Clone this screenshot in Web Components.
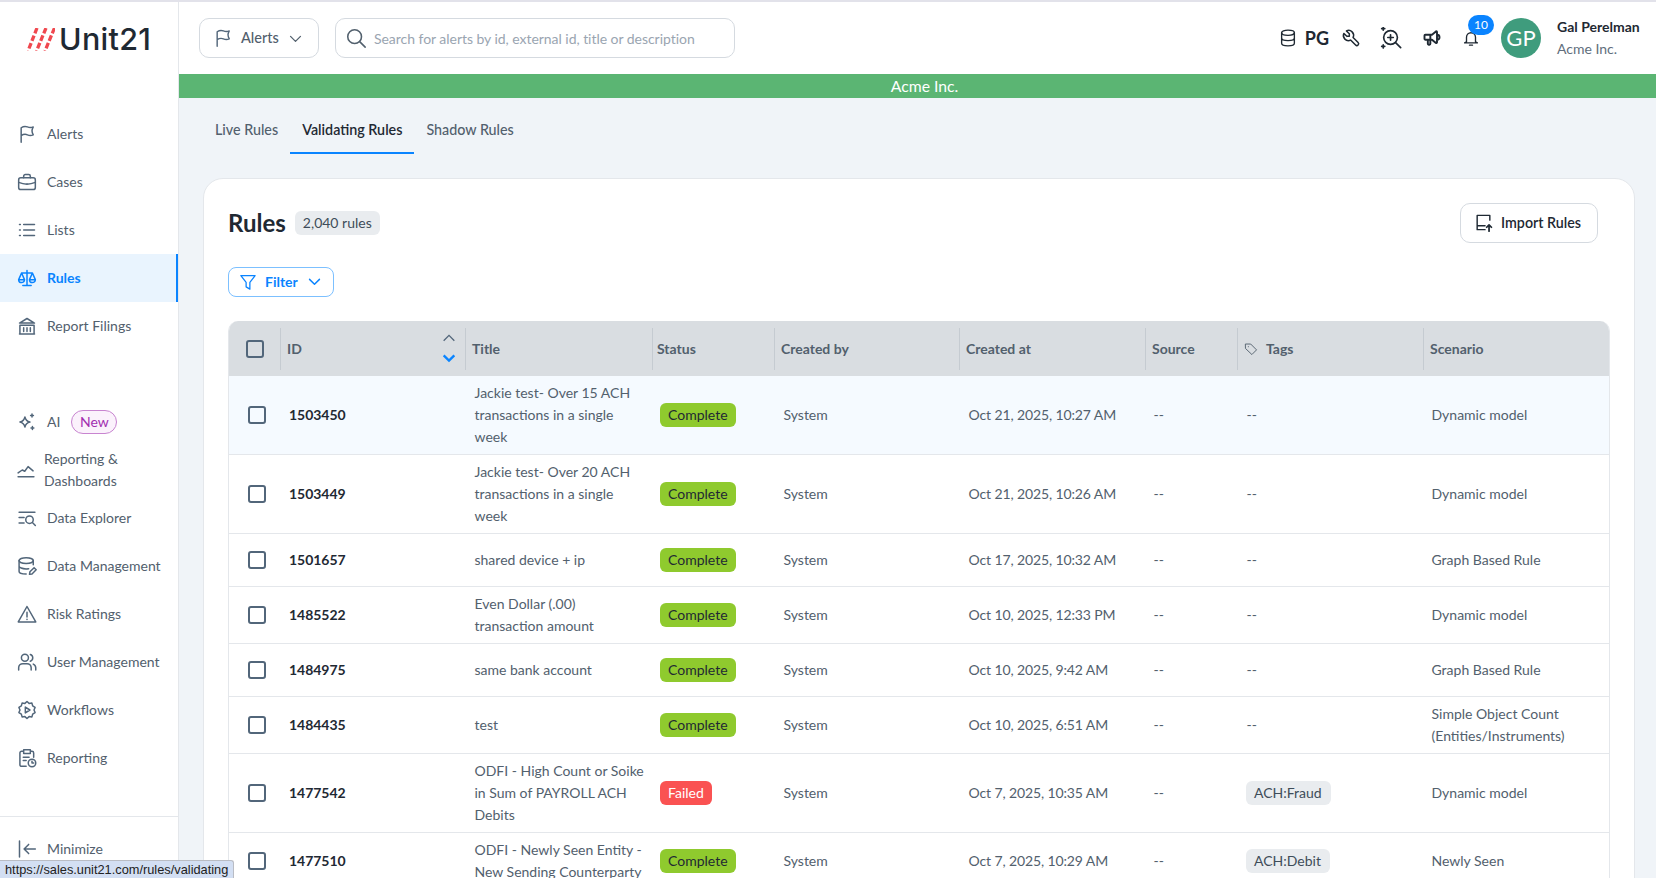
<!DOCTYPE html>
<html lang="en"><head><meta charset="utf-8"><title>Rules</title>
<style>
html,body{margin:0;padding:0;height:878px;overflow:hidden;background:#f0f4f8;font-family:Lato,"Liberation Sans",sans-serif;color:#1f2933}
</style></head><body>
<u21-app>
  <u21-sidebar slot="side">
    <u21-nav icon="flag">Alerts</u21-nav>
    <u21-nav icon="case">Cases</u21-nav>
    <u21-nav icon="list">Lists</u21-nav>
    <u21-nav icon="scale" active>Rules</u21-nav>
    <u21-nav icon="bank">Report Filings</u21-nav>
    <u21-nav icon="spark" class="gap" badge="New">AI</u21-nav>
    <u21-nav icon="chart" tight>Reporting &amp; Dashboards</u21-nav>
    <u21-nav icon="explore">Data Explorer</u21-nav>
    <u21-nav icon="db">Data Management</u21-nav>
    <u21-nav icon="risk">Risk Ratings</u21-nav>
    <u21-nav icon="users">User Management</u21-nav>
    <u21-nav icon="gear">Workflows</u21-nav>
    <u21-nav icon="report">Reporting</u21-nav>
    <u21-nav icon="min" slot="foot">Minimize</u21-nav>
  </u21-sidebar>
  <u21-topbar slot="top"></u21-topbar>
  <u21-banner slot="top">Acme Inc.</u21-banner>
  <u21-tabs slot="main"></u21-tabs>
  <u21-card slot="main">
    <u21-row rid="1503450" status="Complete" by="System" at="Oct 21, 2025, 10:27 AM" scenario="Dynamic model" h="79" hl>Jackie test- Over 15 ACH transactions in a single week</u21-row>
    <u21-row rid="1503449" status="Complete" by="System" at="Oct 21, 2025, 10:26 AM" scenario="Dynamic model" h="79">Jackie test- Over 20 ACH transactions in a single week</u21-row>
    <u21-row rid="1501657" status="Complete" by="System" at="Oct 17, 2025, 10:32 AM" scenario="Graph Based Rule" h="53">shared device + ip</u21-row>
    <u21-row rid="1485522" status="Complete" by="System" at="Oct 10, 2025, 12:33 PM" scenario="Dynamic model" h="57">Even Dollar (.00)<br>transaction amount</u21-row>
    <u21-row rid="1484975" status="Complete" by="System" at="Oct 10, 2025, 9:42 AM" scenario="Graph Based Rule" h="53">same bank account</u21-row>
    <u21-row rid="1484435" status="Complete" by="System" at="Oct 10, 2025, 6:51 AM" scenario="Simple Object Count (Entities/Instruments)" h="57">test</u21-row>
    <u21-row rid="1477542" status="Failed" by="System" at="Oct 7, 2025, 10:35 AM" tags="ACH:Fraud" scenario="Dynamic model" h="79">ODFI - High Count or Soike in Sum of PAYROLL ACH Debits</u21-row>
    <u21-row rid="1477510" status="Complete" by="System" at="Oct 7, 2025, 10:29 AM" tags="ACH:Debit" scenario="Newly Seen" h="57">ODFI - Newly Seen Entity - New Sending Counterparty</u21-row>
  </u21-card>
  <u21-status slot="over">https://sales.unit21.com/rules/validating</u21-status>
</u21-app>
<script>
const I={
flag:'<path d="M5 22V4.500c3-2 5-2 7.500-1s4.500 1 7 0c-1 2-1.500 3-1.500 4.500s.5 3 1.500 5c-2.500 1-4.500 1-7 0s-4.500-1-7.500 1"/>',
case:'<rect x="2" y="7" width="20" height="14" rx="2.500"/><path d="M8 7V5a2 2 0 0 1 2-2h4a2 2 0 0 1 2 2v2M2 12.500c6 2.500 14 2.500 20 0M12 14v.3"/>',
list:'<path d="M8 5.500h13M8 12h13M8 18.500h13M3 5.500h1M3 12h1M3 18.500h1"/>',
scale:'<path d="M12 3v18M7 21h10M5.500 6h13M5.500 6L2 14a3.500 3.500 0 0 0 7 0zM18.500 6L15 14a3.500 3.500 0 0 0 7 0zM2 14h7M15 14h7"/>',
bank:'<path d="M3 8.500L12 3l9 5.500zM3 21.500h18M3.500 21.500V11h17v10.500M8 14v4.500M12 14v4.500M16 14v4.500"/>',
spark:'<path d="M9.500 6c.8 3.500 2.700 5.400 6 6-3.300.8-5.200 2.700-6 6-.8-3.300-2.700-5.200-6-6 3.300-.6 5.200-2.500 6-6zM18 2.500v3.500M16.300 4.200h3.400M18.500 17.500v3.500M16.800 19.200h3.400"/>',
chart:'<path d="M2.500 20h19M2.500 15.500l5-3.500 3 1.500 4-5.500 6 5"/>',
explore:'<path d="M2.500 5h19M2.500 11.500h6M2.500 18h6"/><circle cx="15" cy="14" r="4.500"/><path d="M18.500 17.500l3.500 3.500"/>',
db:'<ellipse cx="11" cy="5.500" rx="8.500" ry="3.500"/><path d="M2.500 5.500v13c0 1.700 3.500 3 8.500 3M19.500 5.500v5M2.500 12c0 1.900 3.800 3.500 8.500 3.500 1 0 2-.1 3-.2M15 22l.5-3 5-5 2.500 2.500-5 5z"/>',
risk:'<path d="M12 3L1.500 21.500h21zM12 10v5.500M12 18.300v.2"/>',
users:'<circle cx="9.500" cy="7" r="4.200"/><path d="M2 21.500V19a5 5 0 0 1 5-5h5a5 5 0 0 1 5 5v2.500M16 3a4.200 4.200 0 0 1 0 8M22.500 21.500V19a5 5 0 0 0-3-4.500"/>',
gear:'<path d="M12 1.800l2.500 2.300 3.400-.4.900 3.300 2.900 1.900-1.300 3.100 1.300 3.100-2.900 1.900-.9 3.300-3.400-.4-2.500 2.300-2.500-2.300-3.400.4-.9-3.300-2.900-1.900 1.300-3.100-1.300-3.100 2.900-1.900.9-3.300 3.400.4z"/><path d="M10 8.500l5.500 3.500-5.500 3.500z"/>',
report:'<path d="M11 22H5.500a2 2 0 0 1-2-2V6a2 2 0 0 1 2-2H8M16 4h2a2 2 0 0 1 2 2v5M8 2h8v4.500H8zM7.500 11h7M7.500 15h3.500"/><circle cx="18" cy="18" r="4.500"/><path d="M18 15.800V18h2"/>',
min:'<path d="M3 2.500v19M22 12H8.500M14 6.500L8.500 12l5.500 5.500"/>',
search:'<circle cx="10.500" cy="10.500" r="7.500"/><path d="M16 16l6 6"/>',
chev:'<path d="M5 9l7 7 7-7"/>',
filter:'<path d="M2.500 3.500h19l-7 9v9l-5-3v-6z"/>',
imp:'<path d="M20 9V3H4v18h10M4 16h10"/><path d="M19 23v-8M16 18l3-3 3 3" stroke-width="2.200"/>',
tag:'<path d="M3 3.500h8.500L21.500 13.500l-8 8L3 11.500zM7.500 8v.2"/>',
wrench:'<path d="M7 10h3V7L6.500 3.500a6 6 0 0 1 8 8l6 6a2 2 0 0 1-3 3l-6-6a6 6 0 0 1-8-8L7 10"/>',
aisearch:'<circle cx="11.500" cy="11.500" r="7.500"/><path d="M17 17l5.500 5.500M11.500 8.500v6M8.500 11.500h6M3.500 0v3.500M1.800 1.800h3.400M3.500 19.500V23M1.800 21.200h3.400"/>',
mega:'<path d="M18 8a3 3 0 0 1 0 6M10 8v11a1 1 0 0 1-1 1H8a1 1 0 0 1-1-1v-5M12 8l4.700-3.900A.9.9 0 0 1 18 4.800v12.400a.9.9 0 0 1-1.300.7L12 14H4a1 1 0 0 1-1-1V9a1 1 0 0 1 1-1h8"/>',
bell:'<path d="M6 17V11a6 6 0 0 1 12 0v6l2.500 1.500h-17zM10 21.500h4"/>',
dbs:'<ellipse cx="12" cy="5" rx="8.500" ry="3.500"/><path d="M3.500 5v14c0 1.900 3.800 3.500 8.500 3.500s8.500-1.600 8.500-3.500V5M3.500 12c0 1.900 3.800 3.500 8.500 3.500s8.500-1.600 8.500-3.500"/>'
};
const svg=(n,s,c='currentColor',w=2)=>`<svg width="${s}" height="${s}" viewBox="0 0 24 24" fill="none" stroke="${c}" stroke-width="${w}" stroke-linecap="round" stroke-linejoin="round" aria-hidden="true">${I[n]}</svg>`;
function el(name,render){customElements.define(name,class extends HTMLElement{constructor(){super();this.attachShadow({mode:'open'})}connectedCallback(){this.shadowRoot.innerHTML=render(this)}})}
const COLS='51px 185px 187px 122px 185px 186px 92px 186px 186px';

el('u21-app',()=>`<style>
:host{display:grid;grid-template-columns:179px 1fr;grid-template-rows:auto 1fr;height:876px;border-top:2px solid #e2e2ea;position:relative;overflow:hidden}
.side{grid-row:1/3}
.main{padding:0 21px 0 24px;min-width:0;overflow:hidden}
</style>
<div class="side"><slot name="side"></slot></div>
<div><slot name="top"></slot></div>
<div class="main"><slot name="main"></slot></div>
<slot name="over"></slot>`);

el('u21-sidebar',()=>`<style>
:host{display:flex;flex-direction:column;height:876px;background:#fff;border-right:1px solid #e4e7eb;box-sizing:border-box;overflow:hidden}
.logo{height:108px;display:flex;align-items:flex-start;gap:4px;padding:22px 0 0 27px;box-sizing:border-box;flex:none}
.logo svg{margin-top:4px;flex:none}
.logo b{font:500 30.500px/1 Inter,Roboto,sans-serif;color:#1f2933;letter-spacing:.3px}
.nav{flex:1;display:flex;flex-direction:column;min-height:0}
.foot{border-top:1px solid #e4e7eb;flex:none;padding-top:8px;height:62px;box-sizing:border-box}
</style>
<div class="logo"><svg width="28" height="23" viewBox="0 0 28 23" fill="none" stroke="#f0484f" stroke-width="3.300" stroke-dasharray="5.800 2.300" aria-hidden="true"><path d="M10 0L1 23M19 0L9.500 23M27.500 0L18 23"/></svg><b>Unit21</b></div>
<div class="nav"><slot></slot></div>
<div class="foot"><slot name="foot"></slot></div>`);

el('u21-nav',h=>{const a=h.hasAttribute('active'),gap=h.classList.contains('gap'),t=h.hasAttribute('tight');
return `<style>
:host{display:flex;align-items:center;height:48px;flex:none;box-sizing:border-box;font-size:14px;color:${a?'#0a84ff':'#52606d'};font-weight:${a?700:400};${a?'background:#e9f4fe;border-right:2px solid #0a84ff;':''}${gap?'margin-top:48px;':''}padding-left:${t?'16':'17'}px;line-height:22px}
.i{width:20px;height:20px;display:block;flex:none;margin-right:${t?'8':'10'}px}
svg{display:block}
.t{${t?'width:100px;':''}}
.b{margin-left:11px;border:1px solid #c884d0;background:#fbf2fc;color:#a22fb0;border-radius:12px;padding:0 7.500px;font-size:14px;line-height:22px}
</style><span class="i">${svg(h.getAttribute('icon'),20,a?'#0a84ff':'#52667a',1.8)}</span><span class="t"><slot></slot></span>${h.getAttribute('badge')?`<span class="b">${h.getAttribute('badge')}</span>`:''}`});

el('u21-topbar',()=>`<style>
:host{display:flex;align-items:center;height:72px;background:#fff;padding:0 0 0 20px;box-sizing:border-box;font-size:14px}
.btn{height:40px;width:120px;border:1px solid #d5dae0;border-radius:10px;display:flex;align-items:center;box-sizing:border-box;padding-left:13px;gap:8px;color:#52606d;font-size:14.500px;font-weight:500}
.btn span{padding-bottom:1px}
.s{margin-left:16px;width:400px;height:40px;border:1px solid #d5dae0;border-radius:10px;box-sizing:border-box;display:flex;align-items:center;padding-left:9px;gap:7px;color:#9aa5b1;letter-spacing:-.04px}
.r{margin-left:auto;display:flex;align-items:center;color:#1f2933}
svg{display:block;flex:none}
.pg{font-size:18px;font-weight:700;margin:0 12px 0 8px;color:#1f2933}
.ic{margin-right:20px}
.ic.w{margin-right:19px}
.bell{position:relative;margin-right:21px}
.badge{position:absolute;left:6px;top:-14px;background:#0a84ff;color:#fff;border-radius:10px;font-size:12px;line-height:20px;width:26px;text-align:center}
.av{width:40px;height:40px;border-radius:50%;background:#3f9c7d;color:#fff;font-size:22px;line-height:40px;text-align:center;flex:none}
.u{margin-left:16px;width:99px;line-height:22px}
.u b{display:block;font-weight:700;font-size:14px;color:#1f2933}
.u span{color:#616e7c;font-size:14px}
</style>
<div class="btn">${svg('flag',20,'#52667a',1.7)}<span>Alerts</span>${svg('chev',17,'#52606d',1.8)}</div>
<div class="s">${svg('search',22,'#52606d',1.7)}<span>Search for alerts by id, external id, title or description</span></div>
<div class="r">${svg('dbs',18,'#1f2933',1.8)}<span class="pg">PG</span><span class="ic w">${svg('wrench',20,'#1f2933',1.8)}</span><span class="ic">${svg('aisearch',22,'#1f2933',1.8)}</span><span class="ic">${svg('mega',20,'#1f2933',2.300)}</span><span class="bell">${svg('bell',18,'#1f2933',1.8)}<span class="badge">10</span></span><div class="av">GP</div><div class="u"><b>Gal Perelman</b><span>Acme Inc.</span></div></div>`);

el('u21-banner',()=>`<style>:host{display:block;height:24px;background:#5bb573;color:#fff;text-align:center;font-size:15.750px;line-height:24px;padding-left:14px}</style><slot></slot>`);

el('u21-tabs',()=>`<style>
:host{display:flex;height:56px;font-size:14.300px;font-weight:500;color:#52606d}
span{padding:0 12px;line-height:64px;height:56px;box-sizing:border-box}
.on{color:#1f2933;border-bottom:2px solid #0a84ff;font-weight:600}
</style><span>Live Rules</span><span class="on">Validating Rules</span><span>Shadow Rules</span>`);

el('u21-card',()=>`<style>
:host{display:block;margin-top:24px;background:#fff;border:1px solid #e4e7eb;border-radius:20px 20px 0 0;padding:0 25px 0 24px;height:900px;box-sizing:border-box}
.head{display:flex;align-items:center;height:88px}
h1{font-size:24px;font-weight:700;margin:0 9px 0 0;color:#1f2933;line-height:88px}
.cnt{background:#e9ecef;border-radius:6px;font-size:14px;line-height:24px;padding:0 8px;color:#3e4c59}
.imp{margin-left:auto;margin-right:11px;width:138px;height:40px;border:1px solid #d5dae0;border-radius:10px;display:flex;align-items:center;padding:0 0 1px 13px;gap:8px;box-sizing:border-box;font-size:14.250px;font-weight:600;color:#1f2933}
.f{display:flex;align-items:center;width:106px;height:30px;border:1px solid #7cc0ff;border-radius:8px;box-sizing:border-box;padding:0 0 1px 10px;gap:8px;color:#0a84ff;font-size:14px;font-weight:700}
.f span{width:33px}
.tb{margin-top:24px;border:1px solid #e4e7eb;border-top:0;border-radius:10px 10px 0 0;overflow:hidden;width:1382px;box-sizing:border-box}
.hd{display:grid;grid-template-columns:${COLS};height:55px;background:#d9dde1;align-items:center;font-size:14px;font-weight:700;color:#52606d}
.hd>div{height:42px;border-left:1px solid #c5cbd1;display:flex;align-items:center;padding-left:6px;box-sizing:border-box;position:relative}
.hd>div:first-child{border:0;padding-left:17px}
.hd>div.st{padding-left:4px}
.cb{width:18px;height:18px;border:2px solid #52667a;border-radius:3px;box-sizing:border-box;display:block}
.so{position:absolute;right:8px;top:2px;display:flex;flex-direction:column;gap:4px}
svg{display:block;flex:none}
</style>
<div class="head"><h1>Rules</h1><span class="cnt">2,040 rules</span><div class="imp">${svg('imp',19,'#1f2933',1.8)}Import Rules</div></div>
<div class="f">${svg('filter',18,'#0a84ff',1.7)}<span>Filter</span>${svg('chev',17,'#0a84ff',2)}</div>
<div class="tb"><div class="hd"><div><span class="cb"></span></div><div>ID<span class="so"><svg width="16" height="16" viewBox="0 0 24 24" fill="none" stroke="#52667a" stroke-width="2"><path d="M4 16l8-8 8 8"/></svg><svg width="16" height="16" viewBox="0 0 24 24" fill="none" stroke="#0a84ff" stroke-width="3.500"><path d="M4 8l8 8 8-8"/></svg></span></div><div>Title</div><div class="st">Status</div><div>Created by</div><div>Created at</div><div>Source</div><div>${svg('tag',14,'#52606d',1.6)}<span style="margin-left:8px">Tags</span></div><div>Scenario</div></div><slot></slot></div>`);

el('u21-row',h=>{const g=n=>h.getAttribute(n),st=g('status'),tags=g('tags');return `<style>
:host{display:grid;grid-template-columns:${COLS};align-items:center;height:${g('h')}px;box-sizing:border-box;border-bottom:1px solid #e4e7eb;font-size:14px;line-height:22px;color:#52606d;background:${h.hasAttribute('hl')?'#f5faff':'#fff'}}
.d{padding-left:9.500px;padding-right:4px}
.cb{width:18px;height:18px;border:2px solid #52667a;border-radius:3px;box-sizing:border-box;margin-left:19px}
.id{font-weight:700;color:#1f2933;padding-left:9px;letter-spacing:-.04px}
.p{display:inline-block;height:24px;line-height:24px;border-radius:6px;padding:0 8px;font-size:14px;background:${st==='Failed'?'#fa5252':'#8fca2e'};color:${st==='Failed'?'#fff':'#1f2933'}}
.t{display:inline-block;background:#e9ecef;border-radius:6px;line-height:24px;padding:0 9px 0 8.500px;color:#3e4c59;margin-left:-1px}
</style><div class="cb"></div><div class="d id">${g('rid')}</div><div class="d"><slot></slot></div><div class="d" style="padding-left:8px"><span class="p">${st}</span></div><div class="d">${g('by')}</div><div class="d" style="letter-spacing:-.12px">${g('at')}</div><div class="d" style="padding-left:8.500px">--</div><div class="d">${tags?`<span class="t">${tags}</span>`:'--'}</div><div class="d" style="padding-left:8.500px">${g('scenario')}</div>`});

el('u21-status',()=>`<style>:host{position:absolute;left:0;bottom:0;height:18px;width:234px;box-sizing:border-box;background:#d3dff3;border:1px solid #b9bcc4;border-width:1px 1px 0 0;border-radius:0 3px 0 0;font:12.800px/18px "Liberation Sans",sans-serif;color:#222;padding-left:5px;white-space:nowrap;overflow:hidden}</style><slot></slot>`);
</script>
</body></html>
